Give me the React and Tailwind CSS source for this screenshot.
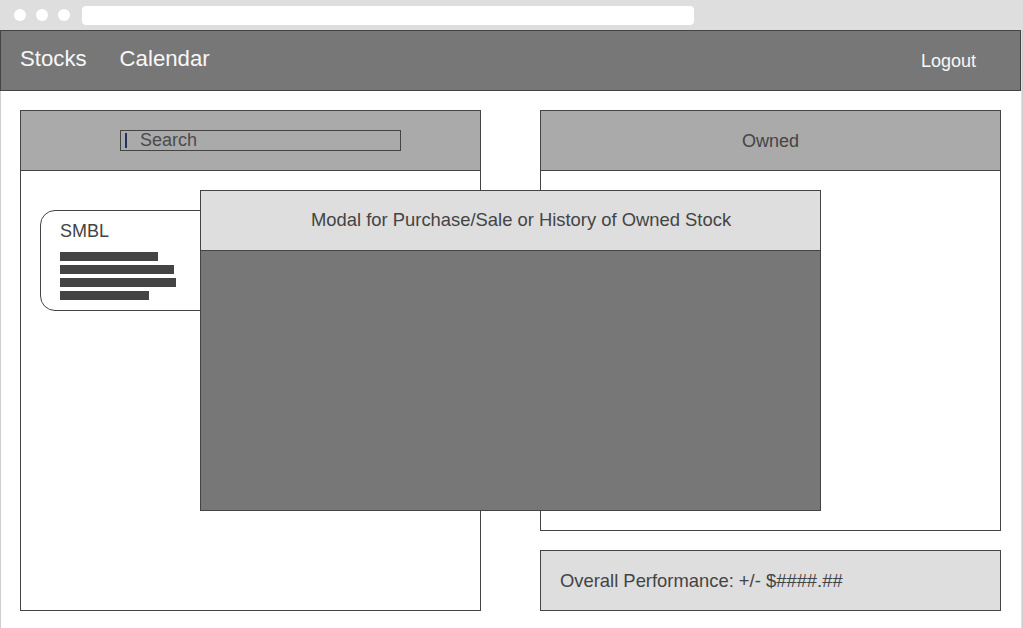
export default function App() {
  const bars = [98, 114, 116, 89];

  return (
    <div className="w-[1023px] h-[628px] bg-[#dedede] flex flex-col overflow-hidden font-['Liberation_Sans',Arial,sans-serif] text-[#444]">
      {/* browser chrome */}
      <div className="h-[30px] flex items-center pl-[14px] shrink-0">
        <div className="flex gap-[10px]">
          <span className="w-[12px] h-[12px] rounded-full bg-white" />
          <span className="w-[12px] h-[12px] rounded-full bg-white" />
          <span className="w-[12px] h-[12px] rounded-full bg-white" />
        </div>
        <div className="ml-[12px] w-[612px] h-[19px] rounded-[4px] bg-white" />
      </div>

      <div className="flex flex-1 min-h-0">
        <div className="w-[1021px] flex flex-col">
          {/* nav */}
          <nav className="h-[61px] shrink-0 bg-[#777] border border-[#444] flex items-center text-[#f7f7f7]">
            <a className="ml-[19px] text-[22.2px] leading-none pb-[3px]">Stocks</a>
            <a className="ml-[33px] text-[22.2px] leading-none pb-[3px]">Calendar</a>
            <a className="ml-auto mr-[44px] text-[18px] leading-none pt-[1px]">Logout</a>
          </nav>

          {/* main */}
          <main className="relative flex-1 bg-white border-l border-[#cfcfcf] pl-[19px] pt-[19px]">
            <div className="grid grid-cols-[461px_461px] gap-x-[59px]">
              {/* stocks panel */}
              <section className="h-[501px] border border-[#444] flex flex-col">
                <div className="h-[60px] bg-[#aaa] border-b border-[#444] flex items-center pl-[99px]">
                  <div className="w-[281px] h-[21px] border border-[#444] flex items-center pl-[4px]">
                    <span className="w-[2px] h-[15px] bg-[#24305e]" />
                    <span className="ml-[13px] text-[18px] leading-none text-[#4a4a4a] pb-[2px]">Search</span>
                  </div>
                </div>
                <div className="pt-[39px] pl-[19px]">
                  <div className="w-[300px] h-[101px] border border-[#444] rounded-[15px] pl-[19px] pt-[11px]">
                    <div className="text-[18px] leading-none">SMBL</div>
                    <div className="mt-[12px] flex flex-col gap-[4px]">
                      {bars.map((w, i) => (
                        <div key={i} className="h-[9px] bg-[#444]" style={{ width: w }} />
                      ))}
                    </div>
                  </div>
                </div>
              </section>

              {/* owned column */}
              <div className="flex flex-col gap-[19px]">
                <section className="h-[421px] border border-[#444]">
                  <div className="h-[60px] bg-[#aaa] border-b border-[#444] flex items-center justify-center pt-[1px] text-[18px]">
                    Owned
                  </div>
                </section>
                <section className="h-[61px] border border-[#444] bg-[#dedede] flex items-center pl-[19px] text-[18.4px]">
                  Overall Performance: +/- $####.##
                </section>
              </div>
            </div>

            {/* modal */}
            <div className="absolute left-[199px] top-[99px] w-[621px] h-[321px] border border-[#444] bg-[#777] flex flex-col">
              <div className="h-[60px] bg-[#dedede] border-b border-[#444] flex items-center pl-[110px] pb-[1px] text-[18.4px]">
                Modal for Purchase/Sale or History of Owned Stock
              </div>
            </div>
          </main>
        </div>
        <div className="w-[2px] border-r border-[#cfcfcf]" />
      </div>
    </div>
  );
}
